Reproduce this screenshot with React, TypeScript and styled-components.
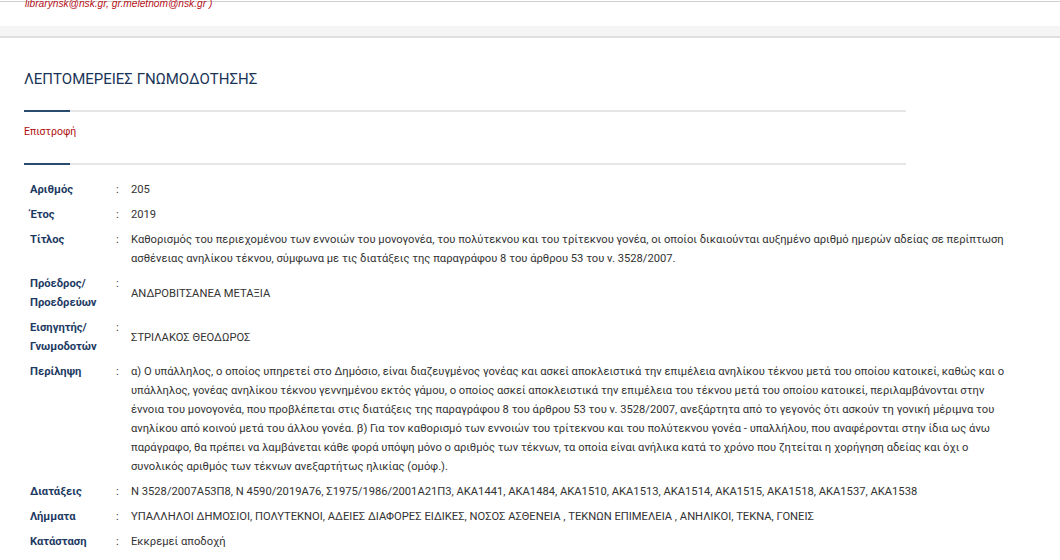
import React from "react";
import styled, { createGlobalStyle } from "styled-components";

const Global = createGlobalStyle`
  html, body { margin: 0; padding: 0; background: #fff; }
  body { font-family: Roboto, "Noto Sans", sans-serif; }
`;

const Page = styled.div`
  width: 1060px;
  min-height: 560px;
  overflow: hidden;
`;

const TopStrip = styled.div`
  height: 24px;
  border-top: 1px solid #cfcfcf;
  margin-top: 1px;
`;

const Email = styled.div`
  font-family: "Liberation Sans", Arial, sans-serif;
  font-style: italic;
  font-size: 10.2px;
  line-height: 12px;
  color: #b5121b;
  padding-left: 25px;
  margin-top: -4px;
`;

const Band = styled.div`
  height: 10px;
  background: #f5f5f5;
  border-bottom: 2px solid #e0e0e0;
`;

const Main = styled.main`
  padding: 31px 0 0 24px;
`;

const Heading = styled.h1`
  margin: 0 0 21px;
  font-size: 15px;
  font-weight: 400;
  line-height: 20px;
  color: #1b3558;
`;

const Divider = styled.div`
  width: 882px;
  height: 2px;
  background: #e6e6e6;
  display: flex;
  &::before {
    content: "";
    width: 46px;
    background: #2a4b70;
  }
`;

const BackLink = styled.a`
  display: block;
  font-size: 10.5px;
  line-height: 14px;
  color: #b00d0d;
  text-decoration: none;
  padding: 13px 0 24px;
`;

const Details = styled.dl`
  margin: 12px 0 0 6px;
  width: 980px;
  display: grid;
  grid-template-columns: 86px 15px 1fr;
`;

const Label = styled.dt`
  font-weight: 700;
  font-size: 11.2px;
  line-height: 19px;
  color: #1d3a63;
  padding: 3px 0;
`;

const Colon = styled.span`
  font-size: 11.2px;
  line-height: 19px;
  color: #333;
  padding: 3px 0;
`;

const Value = styled.dd`
  margin: 0;
  font-size: 11.2px;
  line-height: 19px;
  color: #333;
  padding: 3px 0;
  align-self: center;
`;

type Row = { label: React.ReactNode; value: string };

const rows: Row[] = [
  { label: "Αριθμός", value: "205" },
  { label: "Έτος", value: "2019" },
  {
    label: "Τίτλος",
    value:
      "Καθορισμός του περιεχομένου των εννοιών του μονογονέα, του πολύτεκνου και του τρίτεκνου γονέα, οι οποίοι δικαιούνται αυξημένο αριθμό ημερών αδείας σε περίπτωση ασθένειας ανηλίκου τέκνου, σύμφωνα με τις διατάξεις της παραγράφου 8 του άρθρου 53 του ν. 3528/2007.",
  },
  {
    label: (
      <>
        Πρόεδρος/
        <br />
        Προεδρεύων
      </>
    ),
    value: "ΑΝΔΡΟΒΙΤΣΑΝΕΑ ΜΕΤΑΞΙΑ",
  },
  {
    label: (
      <>
        Εισηγητής/
        <br />
        Γνωμοδοτών
      </>
    ),
    value: "ΣΤΡΙΛΑΚΟΣ ΘΕΟΔΩΡΟΣ",
  },
  {
    label: "Περίληψη",
    value:
      "α) Ο υπάλληλος, ο οποίος υπηρετεί στο Δημόσιο, είναι διαζευγμένος γονέας και ασκεί αποκλειστικά την επιμέλεια ανηλίκου τέκνου μετά του οποίου κατοικεί, καθώς και ο υπάλληλος, γονέας ανηλίκου τέκνου γεννημένου εκτός γάμου, ο οποίος ασκεί αποκλειστικά την επιμέλεια του τέκνου μετά του οποίου κατοικεί, περιλαμβάνονται στην έννοια του μονογονέα, που προβλέπεται στις διατάξεις της παραγράφου 8 του άρθρου 53 του ν. 3528/2007, ανεξάρτητα από το γεγονός ότι ασκούν τη γονική μέριμνα του ανηλίκου από κοινού μετά του άλλου γονέα. β) Για τον καθορισμό των εννοιών του τρίτεκνου και του πολύτεκνου γονέα - υπαλλήλου, που αναφέρονται στην ίδια ως άνω παράγραφο, θα πρέπει να λαμβάνεται κάθε φορά υπόψη μόνο ο αριθμός των τέκνων, τα οποία είναι ανήλικα κατά το χρόνο που ζητείται η χορήγηση αδείας και όχι ο συνολικός αριθμός των τέκνων ανεξαρτήτως ηλικίας (ομόφ.).",
  },
  {
    label: "Διατάξεις",
    value:
      "N 3528/2007Α53Π8, N 4590/2019Α76, Σ1975/1986/2001Α21Π3, ΑΚΑ1441, ΑΚΑ1484, ΑΚΑ1510, ΑΚΑ1513, ΑΚΑ1514, ΑΚΑ1515, ΑΚΑ1518, ΑΚΑ1537, ΑΚΑ1538",
  },
  {
    label: "Λήμματα",
    value:
      "ΥΠΑΛΛΗΛΟΙ ΔΗΜΟΣΙΟΙ, ΠΟΛΥΤΕΚΝΟΙ, ΑΔΕΙΕΣ ΔΙΑΦΟΡΕΣ ΕΙΔΙΚΕΣ, ΝΟΣΟΣ ΑΣΘΕΝΕΙΑ , ΤΕΚΝΩΝ ΕΠΙΜΕΛΕΙΑ , ΑΝΗΛΙΚΟΙ, ΤΕΚΝΑ, ΓΟΝΕΙΣ",
  },
  { label: "Κατάσταση", value: "Εκκρεμεί αποδοχή" },
];

export default function App() {
  return (
    <Page>
      <Global />
      <TopStrip>
        <Email>librarynsk@nsk.gr, gr.meletnom@nsk.gr )</Email>
      </TopStrip>
      <Band />
      <Main>
        <Heading>ΛΕΠΤΟΜΕΡΕΙΕΣ ΓΝΩΜΟΔΟΤΗΣΗΣ</Heading>
        <Divider />
        <BackLink href="#">Επιστροφή</BackLink>
        <Divider />
        <Details>
          {rows.map((r, i) => (
            <React.Fragment key={i}>
              <Label>{r.label}</Label>
              <Colon>:</Colon>
              <Value>{r.value}</Value>
            </React.Fragment>
          ))}
        </Details>
      </Main>
    </Page>
  );
}
